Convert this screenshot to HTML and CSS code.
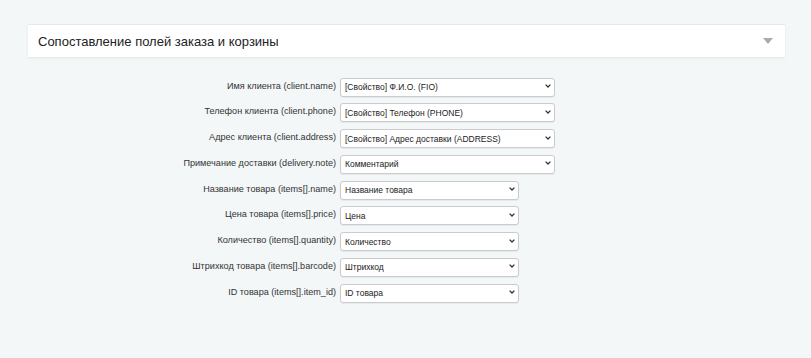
FILE: index.html
```html
<!DOCTYPE html>
<html lang="ru">
<head>
  <meta charset="UTF-8">
  <meta name="viewport" content="width=device-width, initial-scale=1.0">
  <title>Сопоставление полей</title>
  <link rel="stylesheet" href="styles.css">
</head>
<body>

<section class="panel">
  <div class="panel-head">
    <h2 class="panel-title">Сопоставление полей заказа и корзины</h2>
    <svg class="panel-toggle" width="10" height="6" viewBox="0 0 10 6"><path d="M0 0h10L5 6z" fill="#a9abad"/></svg>
  </div>
</section>

<form class="map-form">
  <label class="map-label">Имя клиента (client.name)</label>
  <div class="map-select wide"><select><option>[Свойство] Ф.И.О. (FIO)</option></select><span class="chev"></span></div>

  <label class="map-label">Телефон клиента (client.phone)</label>
  <div class="map-select wide"><select><option>[Свойство] Телефон (PHONE)</option></select><span class="chev"></span></div>

  <label class="map-label">Адрес клиента (client.address)</label>
  <div class="map-select wide"><select><option>[Свойство] Адрес доставки (ADDRESS)</option></select><span class="chev"></span></div>

  <label class="map-label">Примечание доставки (delivery.note)</label>
  <div class="map-select wide"><select><option>Комментарий</option></select><span class="chev"></span></div>

  <label class="map-label">Название товара (items[].name)</label>
  <div class="map-select"><select><option>Название товара</option></select><span class="chev"></span></div>

  <label class="map-label">Цена товара (items[].price)</label>
  <div class="map-select"><select><option>Цена</option></select><span class="chev"></span></div>

  <label class="map-label">Количество (items[].quantity)</label>
  <div class="map-select"><select><option>Количество</option></select><span class="chev"></span></div>

  <label class="map-label">Штрихкод товара (items[].barcode)</label>
  <div class="map-select"><select><option>Штрихкод</option></select><span class="chev"></span></div>

  <label class="map-label">ID товара (items[].item_id)</label>
  <div class="map-select"><select><option>ID товара</option></select><span class="chev"></span></div>
</form>

<script>
document.querySelectorAll('.chev').forEach(c => {
  c.innerHTML = '<svg width="6" height="4" viewBox="0 0 6 4"><path d="M0.6 0.6L3 3L5.4 0.6" fill="none" stroke="#333" stroke-width="1.3"/></svg>';
});
</script>

</body>
</html>
```

FILE: styles.css
```css
* { margin: 0; padding: 0; box-sizing: border-box; }
body {
  background: #f4f7f8;
  font-family: "Liberation Sans", Arial, sans-serif;
  color: #333;
  padding: 24px 26px 0 28px;
  min-height: 100vh;
}

.panel {
  background: #fff;
  border-top: 1px solid #e6e8ea;
  box-shadow: 0 1px 2px rgba(0, 0, 0, 0.08);
}
.panel-head {
  height: 32px;
  display: flex;
  align-items: center;
  justify-content: space-between;
  padding: 0 12px 0 10px;
}
.panel-title { font-size: 13px; font-weight: 400; color: #222; }
.panel-toggle { display: block; }

.map-form {
  display: grid;
  grid-template-columns: 308px auto;
  column-gap: 4px;
  row-gap: 6.75px;
  margin-top: 19px;
  align-items: center;
}
.map-label { text-align: right; font-size: 9.1px; color: #333; }
.map-select { position: relative; width: 179px; height: 19px; }
.map-select.wide { width: 215px; }
.map-select select {
  appearance: none;
  -webkit-appearance: none;
  width: 100%;
  height: 100%;
  border: 1px solid #c9ccce;
  border-radius: 3px;
  background: #fff;
  box-shadow: 0 1px 1px rgba(0, 0, 0, 0.06);
  font-family: inherit;
  font-size: 8.5px;
  color: #222;
  padding: 0 14px 0 4px;
}
.chev { position: absolute; right: 4px; top: 7px; line-height: 0; pointer-events: none; }
```
